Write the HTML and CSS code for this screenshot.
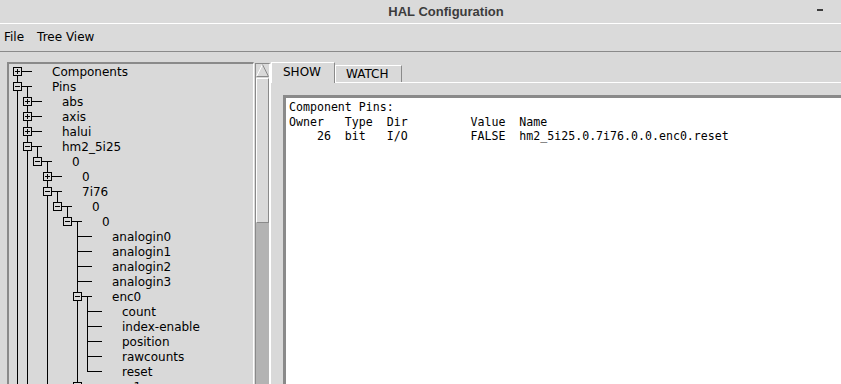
FILE: index.html
```html
<!DOCTYPE html>
<html>
<head>
<meta charset="utf-8">
<title>HAL Configuration</title>
<link rel="stylesheet" href="styles.css">
</head>
<body>
<div class="window">
  <div class="titlebar">
    <span class="title">HAL Configuration</span>
    <span class="min-btn"></span>
  </div>
  <div class="menubar">
    <span class="menu-item">File</span>
    <span class="menu-item">Tree View</span>
  </div>
  <div class="main">
    <div class="tree">
      <svg class="connectors" width="243" height="340" viewBox="0 0 243 340">
        <defs>
          <g id="plus"><rect x="-3.5" y="-3.5" width="8" height="8" fill="#d9d9d9" stroke="#000000"/><path d="M-2 0.5H3M0.5 -2V3" stroke="#000000" fill="none"/></g>
          <g id="minus"><rect x="-3.5" y="-3.5" width="8" height="8" fill="#d9d9d9" stroke="#000000"/><path d="M-2 0.5H3" stroke="#000000" fill="none"/></g>
        </defs>
        <path class="ln" d="M8.5 7V340M18.5 22V340M28.5 82V98M38.5 97V340M48.5 127V143M58.5 142V158M68.5 157V340M78.5 232V308"/>
        <path class="ln" d="M8 7.5h15M8 22.5h15M18 37.5h15M18 52.5h15M18 67.5h15M18 82.5h15M28 97.5h15M38 112.5h15M38 127.5h15M48 142.5h15M58 157.5h15M68 172.5h15M68 187.5h15M68 202.5h15M68 217.5h15M68 232.5h15M78 247.5h15M78 262.5h15M78 277.5h15M78 292.5h15M78 307.5h15M68 322.5h15"/>
        <use href="#plus" x="8" y="7"/>
        <use href="#minus" x="8" y="22"/>
        <use href="#plus" x="18" y="37"/>
        <use href="#plus" x="18" y="52"/>
        <use href="#plus" x="18" y="67"/>
        <use href="#minus" x="18" y="82"/>
        <use href="#minus" x="28" y="97"/>
        <use href="#plus" x="38" y="112"/>
        <use href="#minus" x="38" y="127"/>
        <use href="#minus" x="48" y="142"/>
        <use href="#minus" x="58" y="157"/>
        <use href="#minus" x="68" y="232"/>
        <use href="#plus" x="68" y="322"/>
      </svg>
      <div class="row l0">Components</div>
      <div class="row l0">Pins</div>
      <div class="row l1">abs</div>
      <div class="row l1">axis</div>
      <div class="row l1">halui</div>
      <div class="row l1">hm2_5i25</div>
      <div class="row l2">0</div>
      <div class="row l3">0</div>
      <div class="row l3">7i76</div>
      <div class="row l4">0</div>
      <div class="row l5">0</div>
      <div class="row l6">analogin0</div>
      <div class="row l6">analogin1</div>
      <div class="row l6">analogin2</div>
      <div class="row l6">analogin3</div>
      <div class="row l6">enc0</div>
      <div class="row l7">count</div>
      <div class="row l7">index-enable</div>
      <div class="row l7">position</div>
      <div class="row l7">rawcounts</div>
      <div class="row l7">reset</div>
      <div class="row l6">enc1</div>
    </div>
    <div class="scrollbar">
      <div class="arrow">
        <svg width="13" height="13" viewBox="0 0 13 13">
          <polygon points="6.5,0.5 0.5,12.5 12.5,12.5" fill="#d9d9d9"/>
          <path d="M6.5 0.5L0.5 12.5" stroke="#ffffff" fill="none"/>
          <path d="M6.5 0.5L12.5 12.5M0.5 12.5H12.5" stroke="#8a8a8a" fill="none"/>
        </svg>
      </div>
      <div class="thumb"></div>
    </div>
    <div class="notebook">
      <div class="tabs">
        <div class="tab selected">SHOW</div>
        <div class="tab">WATCH</div>
      </div>
      <div class="pane">
        <div class="textbox"><pre class="text">Component Pins:
Owner   Type  Dir         Value  Name
    26  bit   I/O         FALSE  hm2_5i25.0.7i76.0.0.enc0.reset</pre></div>
      </div>
    </div>
  </div>
</div>
</body>
</html>
```

FILE: styles.css
```css
* { box-sizing: border-box; }
html, body { margin: 0; padding: 0; }
body {
  width: 841px;
  height: 384px;
  overflow: hidden;
  background: #d9d9d9;
  font-family: "DejaVu Sans", sans-serif;
  font-size: 12px;
  color: #000;
}
.window {
  display: flex;
  flex-direction: column;
  height: 384px;
}
.titlebar {
  position: relative;
  flex: none;
  height: 24px;
  background: #dadada;
  border-bottom: 1px solid #ffffff;
  display: flex;
  justify-content: center;
  align-items: flex-start;
  padding-left: 51px;
}
.title {
  font-family: "Liberation Sans", Arial, sans-serif;
  font-weight: bold;
  font-size: 13px;
  line-height: 22px;
  padding-top: 1px;
  color: #3c3c3c;
}
.min-btn {
  position: absolute;
  left: 817px;
  top: 9px;
  width: 6px;
  height: 2px;
  background: #3c3c3c;
}
.menubar {
  flex: none;
  height: 28px;
  background: #dadada;
  border-bottom: 1px solid #8a8a8a;
  display: flex;
  gap: 13px;
  padding: 1px 0 0 4px;
  line-height: 24px;
}
.main {
  flex: 1;
  min-height: 0;
  overflow: hidden;
  display: flex;
  align-items: flex-start;
  padding: 10px 0 0 7px;
}
.tree {
  position: relative;
  flex: none;
  width: 247px;
  height: 340px;
  padding-top: 1px;
  border-top: 2px solid #8a8a8a;
  border-left: 2px solid #8a8a8a;
  border-right: 1px solid #ffffff;
}
.connectors {
  position: absolute;
  left: 0;
  top: 0;
}
.ln { stroke: #000; stroke-width: 1; fill: none; }
.row {
  height: 15px;
  line-height: 15px;
  white-space: nowrap;
}
.l0 { padding-left: 43px; }
.l1 { padding-left: 53px; }
.l2 { padding-left: 63px; }
.l3 { padding-left: 73px; }
.l4 { padding-left: 83px; }
.l5 { padding-left: 93px; }
.l6 { padding-left: 103px; }
.l7 { padding-left: 113px; }
.scrollbar {
  flex: none;
  width: 16px;
  height: 340px;
  margin-left: 1px;
  margin-top: 1px;
  background: #b3b3b3;
  border-left: 1px solid #8a8a8a;
  border-top: 1px solid #8a8a8a;
  border-right: 2px solid #ffffff;
  display: flex;
  flex-direction: column;
}
.arrow {
  height: 14px;
  background: #d9d9d9;
  display: flex;
  justify-content: center;
}
.thumb {
  height: 145px;
  background: #d9d9d9;
  border-top: 1px solid #ffffff;
  border-left: 1px solid #ffffff;
  border-right: 1px solid #8a8a8a;
  border-bottom: 1px solid #8a8a8a;
}
.notebook {
  flex: 1;
  min-width: 0;
  display: flex;
  flex-direction: column;
  height: 340px;
}
.tabs {
  flex: none;
  height: 20px;
  display: flex;
  align-items: flex-end;
}
.tab {
  height: 17px;
  line-height: 16px;
  padding: 0 13px 0 10px;
  border-left: 1px solid #ffffff;
  border-top: 1px solid #ffffff;
  border-right: 1px solid #8a8a8a;
  background: #d9d9d9;
  white-space: nowrap;
}
.tab.selected {
  position: relative;
  height: 21px;
  margin-bottom: -1px;
  padding: 1px 13px 0 11px;
}
.pane {
  flex: 1;
  border-top: 1px solid #ffffff;
  padding: 12px 0 0 12px;
  overflow: hidden;
}
.textbox {
  width: 700px;
  height: 320px;
  background: #ffffff;
  border-top: 3px solid #8a8a8a;
  border-left: 3px solid #8a8a8a;
  padding: 2px 0 0 3px;
}
.text {
  margin: 0;
  font-family: "DejaVu Sans Mono", monospace;
  font-size: 11.6px;
  line-height: 14.5px;
  color: #000;
}
```
